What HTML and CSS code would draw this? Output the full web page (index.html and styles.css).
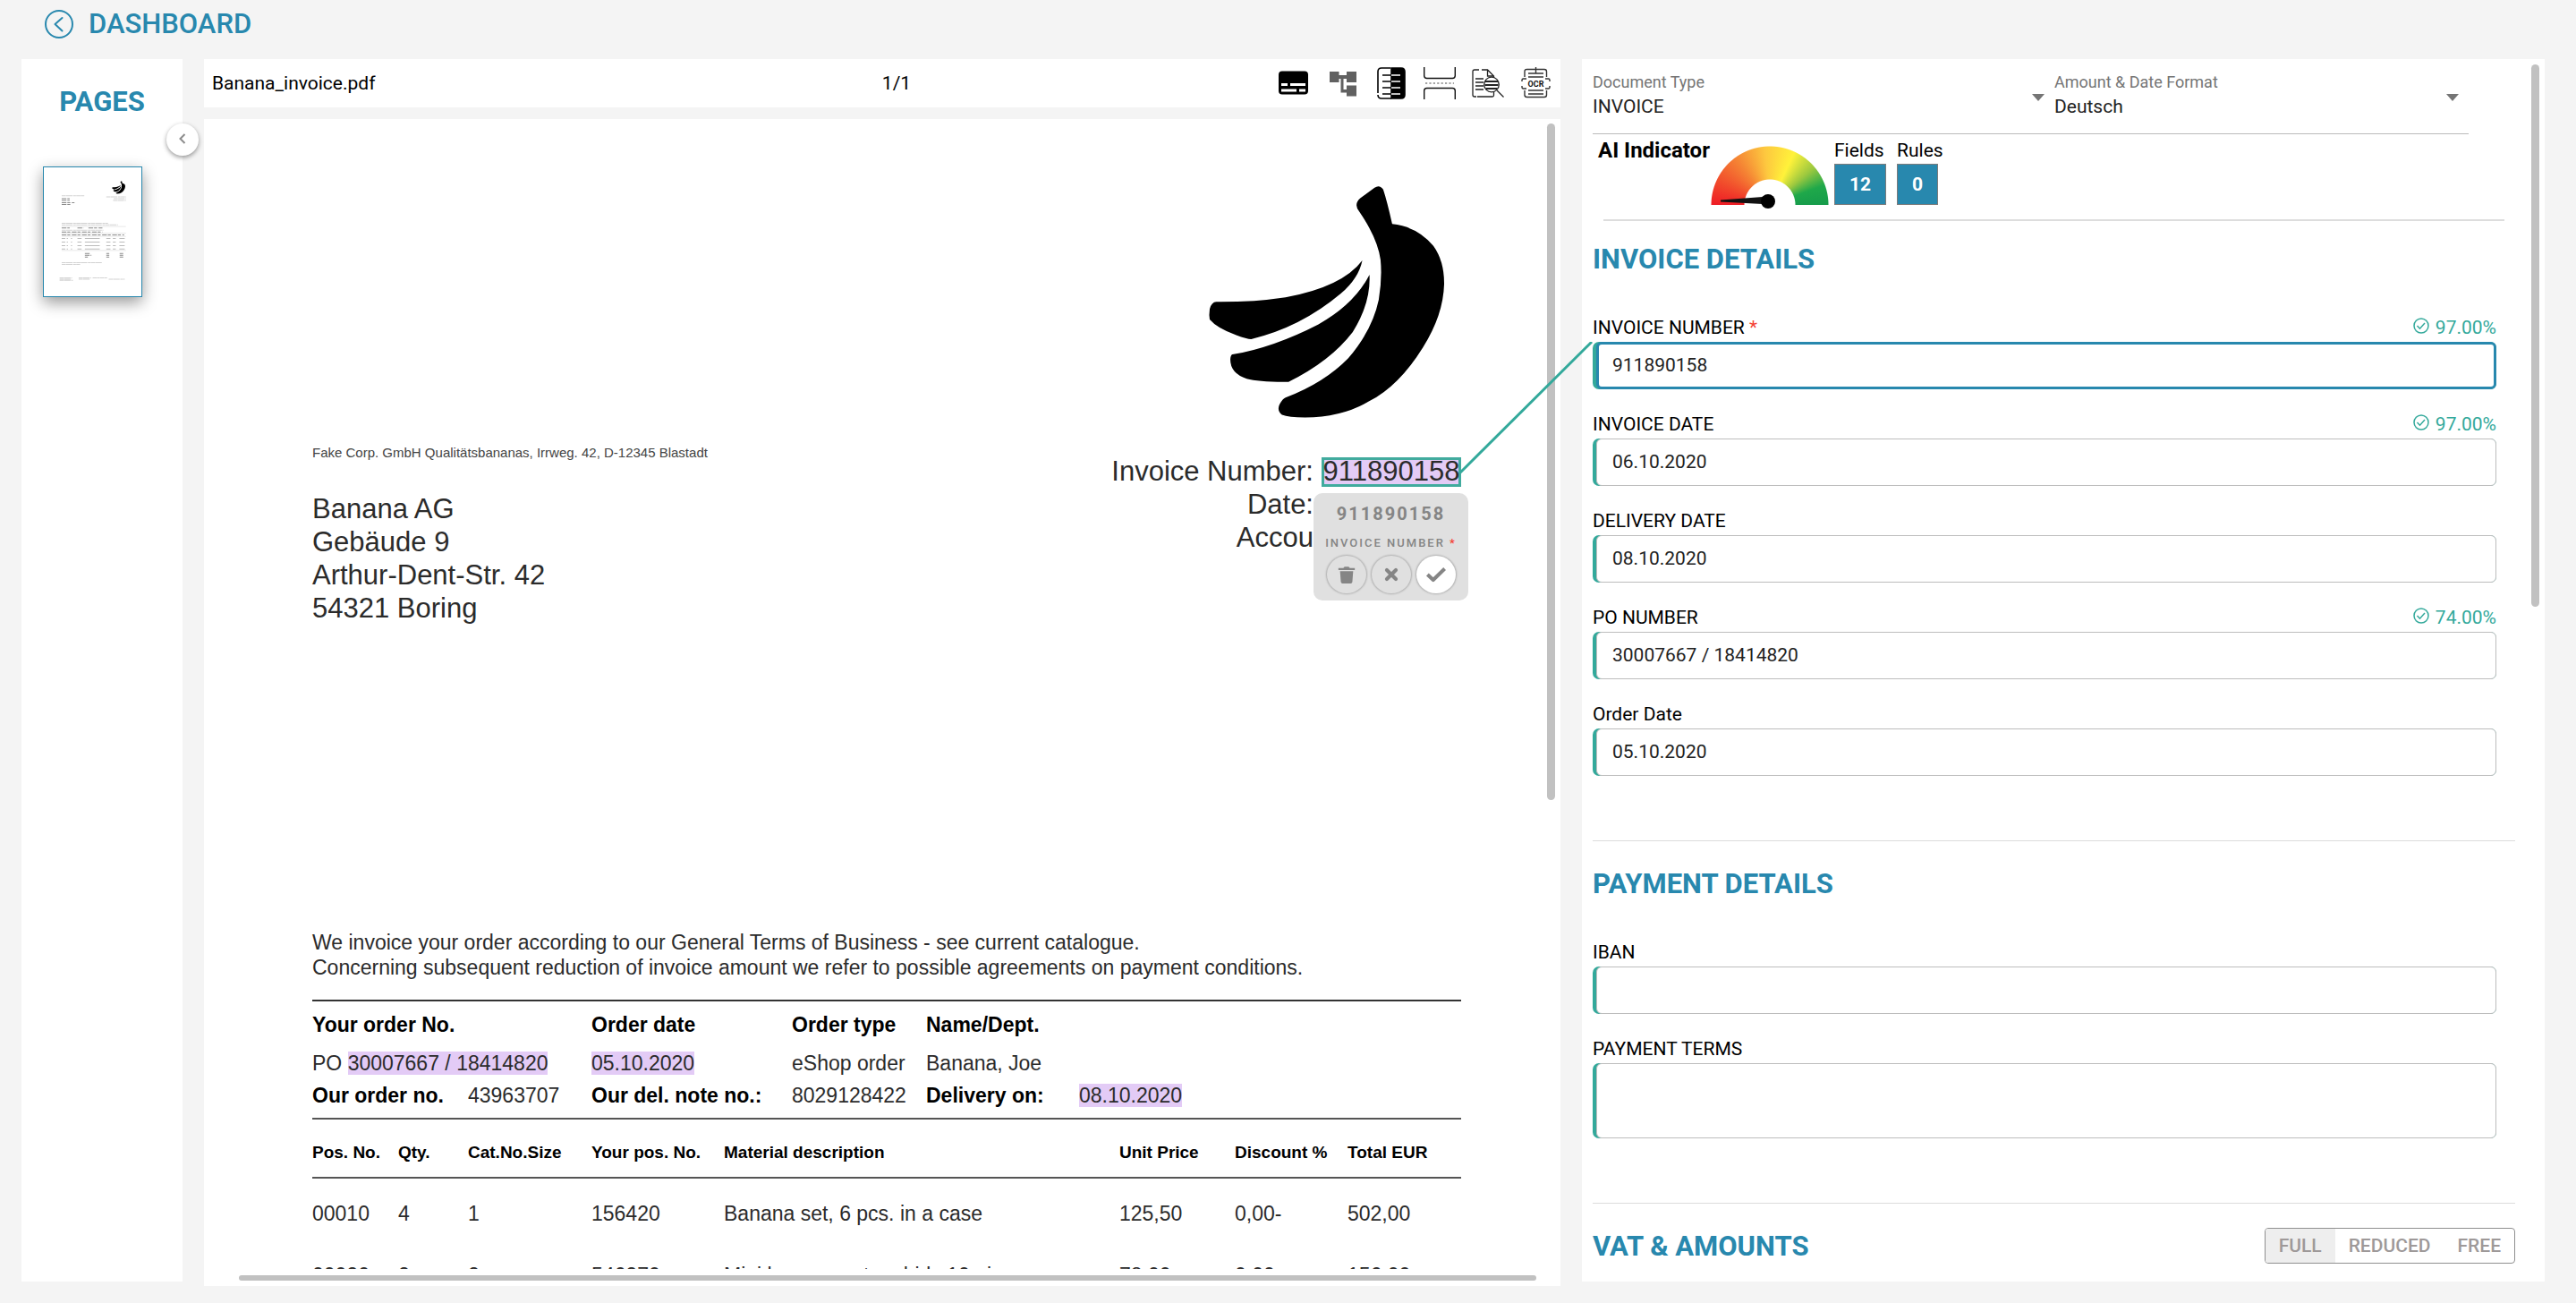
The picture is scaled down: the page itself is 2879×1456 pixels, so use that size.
FILE: index.html
```
<!DOCTYPE html>
<html lang="en">
<head>
<meta charset="utf-8">
<title>Banana_invoice.pdf</title>
<link rel="stylesheet" href="styles.css">
</head>
<body>
<header class="topbar">
  <a class="back" href="#">
    <svg class="back-icon" viewBox="0 0 34 34" fill="none" stroke="currentColor" stroke-width="2" stroke-linecap="round" stroke-linejoin="round"><circle cx="17" cy="17" r="15"/><path d="M20.500 10l-8 7 8 7.500"/></svg>
    <span>DASHBOARD</span>
  </a>
</header>

<main class="workspace">
  <aside class="pages">
    <h2 class="heading pages-title">PAGES</h2>
    <a class="thumb" href="#" aria-label="Page 1">
      <svg viewBox="147 562 328 431" preserveAspectRatio="none" fill="none">
        <g transform="translate(358 600) scale(.056 .056)" fill="#000"><use href="#banana"/></g>
        <g stroke="#d2d2d2" stroke-width="3" stroke-dasharray="14 1 22 2 9 1">
          <path d="M207 657h76M357 661h66M382 667h41M380 673h43M207 749h156M207 754h189M207 772h140M207 881h135M207 887h62M200 932h42M200 936h40M200 940h45M264 932h42M264 936h38M311 932h24M336 932h24M365 936h54"/>
        </g>
        <g stroke="#bdbdbd" stroke-width="3" stroke-dasharray="12 5 4 10 4 18 14 11 50 22 14 8 10 12 16 0">
          <path d="M207 800h212M207 812h212M207 824h212M207 835h212"/>
        </g>
        <g stroke="#8a8a8a" stroke-width="3" stroke-dasharray="16 3 10 5">
          <path d="M207 667h27M207 673h27M207 680h43M207 686h31M207 765h27M260 765h20M297 765h47M207 778h137M207 788h210M285 850h18M357 850h10M402 850h12M285 856h22M357 856h10M402 856h12M285 862h10M357 862h10M402 862h12"/>
        </g>
        <path stroke="#ddd" stroke-width="2" d="M207 760h216M207 782h216M207 793h216M207 840h216"/>
      </svg>
    </a>
    <button class="collapse" type="button" aria-label="Collapse pages">
      <svg viewBox="0 0 12 12" fill="none" stroke="#8c8c8c" stroke-width="2"><path d="M8.500 1L3.500 6l5 5"/></svg>
    </button>
  </aside>

  <section class="viewer">
    <div class="toolbar">
      <span class="file">Banana_invoice.pdf</span>
      <span class="counter">1/1</span>
      <div class="tools">
        <button type="button" aria-label="Captions"><svg viewBox="2 0 36 36"><rect x="2" y="4.500" width="33" height="26" rx="4"/><path fill="#fff" d="M5 18h7v3H5zM15 18h17v3H15zM5 24.500h17v3H5zM25 24.500h7v3h-7z"/></svg></button>
        <button type="button" aria-label="Tree"><svg viewBox="0 0 36 36" fill="#616161"><path d="M3 5h10.500v4H22V5h11v12H22v-4h-3.500v12H22v-4.500h11v12H22v-4h-6.500V13h-2v4H3z"/></svg></button>
        <button type="button" aria-label="Contrast"><svg viewBox="0 0 36 36" fill="none" stroke="#000" stroke-width="1.600"><path d="M17 1H7Q3 1 3 5v24M3 31q0 4 4 4h11"/><path fill="#000" d="M18 1h11q4 0 4 4v26q0 4-4 4H18z"/><path d="M8 9h10M8 16h10M8 23h10M8 30h10"/><path stroke="#fff" d="M18 9h10M18 16h10M18 23h10M18 30h10"/></svg></button>
        <button type="button" aria-label="Split page"><svg viewBox="0 0 36 36" fill="none" stroke="#111" stroke-width="1.400"><path d="M.7 0v9.500q0 3 3 3h28.600q3 0 3-3V0M.7 36v-9.500q0-3 3-3h28.600q3 0 3 3V36"/><path stroke="#888" stroke-width="1.600" stroke-dasharray="2.200 2.200" d="M2 18h32"/></svg></button>
        <button type="button" aria-label="Search document"><svg viewBox="0 0 36 36" fill="none" stroke="#222" stroke-width="1.300"><path d="M8 3H3Q1 3 1 5v26q0 2 2 2h2M11 3h6.500l7 7v4M17.500 3v7h7M6 33h17q1.500 0 1.500-1.500V28M4 13h9M4 17h9M4 21h9M4 25h9"/><circle cx="22" cy="19.500" r="8.300" fill="#fff"/><path d="M28 26l7.500 7.500"/><path stroke-width="2" d="M15 16h14M14.500 20h15M16 24h12"/></svg></button>
        <button type="button" aria-label="OCR"><svg viewBox="0 0 36 36" fill="none" stroke="#333" stroke-width="1.400"><path d="M5 11V5q0-2.500 2.500-2.500H27q2.500 0 2.500 2.500v6M5 26v5q0 2.500 2.500 2.500H27q2.500 0 2.500-2.500v-5M17.500 0v7M9 7h17M9 11h17M9 26h17M9 30h17M7 13H3.500Q2 13 2 14.500V16M2 21v1.500Q2 24 3.500 24H7M28 13h3.500q1.500 0 1.500 1.500V16M33 21v1.500q0 1.500-1.500 1.500H28"/><text x="17.500" y="21.500" class="ocr">OCR</text></svg></button>
      </div>
    </div>

    <div class="canvas">
      <div class="scroll">
        <article class="page">
          <div class="letterhead">
            <div class="sender">
              <p class="from">Fake Corp. GmbH Qualitätsbananas, Irrweg. 42, D-12345 Blastadt</p>
              <address class="address">Banana AG<br>Gebäude 9<br>Arthur-Dent-Str. 42<br>54321 Boring</address>
            </div>
            <div class="brand">
              <svg class="logo" viewBox="330 135 800 765" preserveAspectRatio="none">
                <g id="banana">
                  <path d="M828 205Q826 192 840 180L888 146Q905 134 917 152Q930 190 947 264Q1030 272 1085 335Q1122 385 1121 460Q1118 560 1050 665Q970 790 870 840Q780 892 655 893Q600 892 578 884Q560 870 570 850Q580 832 590 828Q720 780 800 700Q880 610 902 510Q914 440 908 380Q898 310 836 222Q828 212 828 205Z"/>
                  <path d="M847 382Q835 440 775 490Q640 600 475 638Q460 638 425 625Q360 602 336 574Q333 560 336 540Q342 518 358 517Q480 518 590 502Q780 468 847 382Z"/>
                  <path d="M871 429Q876 520 815 615Q740 710 600 777Q500 778 460 767Q405 750 405 704Q406 690 412 688Q550 665 700 590Q820 525 871 429Z"/>
                </g>
              </svg>
              <div class="meta">
                <span>Invoice Number:</span>
                <span class="picked">911890158
                  <span class="popup">
                    <strong class="popup-value">911890158</strong>
                    <span class="popup-label">INVOICE NUMBER <span class="star">*</span></span>
                    <span class="popup-actions">
                      <button type="button" aria-label="Delete"><svg viewBox="0 0 24 24" fill="#858585"><path d="M2 4h6l1.500-1.500h5L16 4h6v2.500H2zM4 8h16l-1 13q-.2 2-2 2H7q-1.800 0-2-2z"/></svg></button>
                      <button type="button" aria-label="Reject"><svg viewBox="0 0 24 24" stroke="#858585" stroke-width="4.500" stroke-linecap="round"><path d="M6.500 6.500l11 11M17.500 6.500l-11 11"/></svg></button>
                      <button class="accept" type="button" aria-label="Accept"><svg viewBox="0 0 24 24" fill="none" stroke="#858585" stroke-width="4.500" stroke-linejoin="round"><path d="M1.500 12l7 6.500L22.500 5"/></svg></button>
                    </span>
                  </span>
                </span>
                <span class="meta-label">Date:</span>
                <span class="meta-label">Accou</span>
              </div>
            </div>
          </div>

          <p class="terms">We invoice your order according to our General Terms of Business - see current catalogue.<br>Concerning subsequent reduction of invoice amount we refer to possible agreements on payment conditions.</p>

          <table class="order">
            <colgroup><col class="w174"><col class="w138"><col class="w224"><col class="w150"><col class="w171"><col></colgroup>
            <tr class="order-head"><th colspan="2">Your order No.</th><th>Order date</th><th>Order type</th><th>Name/Dept.</th><td></td></tr>
            <tr class="order-first"><td colspan="2">PO <mark>30007667 / 18414820</mark></td><td><mark>05.10.2020</mark></td><td>eShop order</td><td>Banana, Joe</td><td></td></tr>
            <tr class="order-second"><th>Our order no.</th><td>43963707</td><th>Our del. note no.:</th><td>8029128422</td><th>Delivery on:</th><td><mark>08.10.2020</mark></td></tr>
          </table>

          <table class="items">
            <colgroup><col class="w96"><col class="w78"><col class="w138"><col class="w148"><col class="w442"><col class="w129"><col class="w126"><col></colgroup>
            <thead><tr><th>Pos. No.</th><th>Qty.</th><th>Cat.No.Size</th><th>Your pos. No.</th><th>Material description</th><th>Unit Price</th><th>Discount %</th><th>Total EUR</th></tr></thead>
            <tbody>
              <tr><td>00010</td><td>4</td><td>1</td><td>156420</td><td>Banana set, 6 pcs. in a case</td><td>125,50</td><td>0,00-</td><td>502,00</td></tr>
              <tr><td>00020</td><td>2</td><td>2</td><td>546270</td><td>Mini banana set orchids 10 pieces</td><td>78,00</td><td>0,00-</td><td>156,00</td></tr>
            </tbody>
          </table>
        </article>
      </div>
      <div class="bar bar-y"></div>
      <div class="bar bar-x"></div>
    </div>
  </section>

  <section class="details">
    <svg class="link" viewBox="0 0 148 147" fill="none" stroke="#33a99b" stroke-width="3"><path d="M0 146L147 0"/></svg>
    <form class="form">
      <div class="selects">
        <div class="select-field">
          <label for="doctype">Document Type</label>
          <select id="doctype"><option>INVOICE</option></select>
          <svg class="caret" viewBox="0 0 14 8"><path d="M0 0h14L7 8z"/></svg>
        </div>
        <div class="select-field">
          <label for="format">Amount &amp; Date Format</label>
          <select id="format"><option>Deutsch</option></select>
          <svg class="caret" viewBox="0 0 14 8"><path d="M0 0h14L7 8z"/></svg>
        </div>
      </div>

      <div class="indicator">
        <strong class="indicator-title">AI Indicator</strong>
        <div class="gauge-box">
          <div class="gauge"></div>
          <svg class="needle" viewBox="0 0 132 72"><path fill="#111" d="M11 60.500L58 57v8L11 62.500z"/><ellipse cx="64" cy="62" rx="8" ry="8"/></svg>
        </div>
        <div class="stats">
          <div class="stat"><span>Fields</span><strong>12</strong></div>
          <div class="stat"><span>Rules</span><strong>0</strong></div>
        </div>
      </div>

      <section class="group first">
        <h2 class="heading">INVOICE DETAILS</h2>
        <div class="fields">
          <div class="field">
            <div class="field-top"><label for="number">INVOICE NUMBER <span class="star">*</span></label><span class="score"><svg viewBox="0 0 18 18"><circle cx="9" cy="9" r="8"/><path d="M4.500 9l3 3.200L13 6"/></svg>97.00%</span></div>
            <div class="box active"><input id="number" type="text" value="911890158"></div>
          </div>
          <div class="field">
            <div class="field-top"><label for="invdate">INVOICE DATE</label><span class="score"><svg viewBox="0 0 18 18"><circle cx="9" cy="9" r="8"/><path d="M4.500 9l3 3.200L13 6"/></svg>97.00%</span></div>
            <div class="box"><input id="invdate" type="text" value="06.10.2020"></div>
          </div>
          <div class="field">
            <div class="field-top"><label for="deldate">DELIVERY DATE</label></div>
            <div class="box"><input id="deldate" type="text" value="08.10.2020"></div>
          </div>
          <div class="field">
            <div class="field-top"><label for="po">PO NUMBER</label><span class="score"><svg viewBox="0 0 18 18"><circle cx="9" cy="9" r="8"/><path d="M4.500 9l3 3.200L13 6"/></svg>74.00%</span></div>
            <div class="box"><input id="po" type="text" value="30007667 / 18414820"></div>
          </div>
          <div class="field">
            <div class="field-top"><label for="orddate">Order Date</label></div>
            <div class="box"><input id="orddate" type="text" value="05.10.2020"></div>
          </div>
        </div>
      </section>

      <section class="group">
        <h2 class="heading">PAYMENT DETAILS</h2>
        <div class="fields">
          <div class="field">
            <div class="field-top"><label for="iban">IBAN</label></div>
            <div class="box"><input id="iban" type="text"></div>
          </div>
          <div class="field">
            <div class="field-top"><label for="terms">PAYMENT TERMS</label></div>
            <div class="box"><textarea id="terms"></textarea></div>
          </div>
        </div>
      </section>

      <section class="group vat">
        <h2 class="heading">VAT &amp; AMOUNTS</h2>
        <div class="toggle">
          <button class="on" type="button">FULL</button>
          <button type="button">REDUCED</button>
          <button type="button">FREE</button>
        </div>
      </section>
    </form>
    <div class="bar bar-form"></div>
  </section>
</main>
</body>
</html>
```
FILE: styles.css
```
* { box-sizing: border-box; }
body {
  margin: 0;
  height: 100vh;
  display: flex;
  flex-direction: column;
  overflow: hidden;
  background: #f4f4f4;
  color: #000;
  font: 21px/24px Roboto, "Liberation Sans", sans-serif;
}
button, input, select, textarea { font: inherit; color: inherit; margin: 0; }
button { padding: 0; border: 0; background: none; cursor: pointer; }
p, h2 { margin: 0; }
svg { display: block; }
.heading { color: #2888ae; font-size: 31px; line-height: 36px; font-weight: 700; }
.star { color: #f44336; }

.topbar { flex: none; height: 66px; padding: 9px 0 0 49px; }
.back {
  display: inline-flex;
  align-items: center;
  gap: 16px;
  color: #2888ae;
  text-decoration: none;
  font-size: 31px;
  line-height: 36px;
  font-weight: 500;
}
.back-icon { width: 34px; height: 34px; }

.workspace {
  flex: 1;
  min-height: 0;
  display: grid;
  grid-template-columns: 180px minmax(0, 1516fr) minmax(0, 1076fr);
  gap: 24px;
  padding: 0 35px 19px 24px;
}

.pages { position: relative; background: #fff; padding: 30px 24px; margin-bottom: 5px; }
.pages-title { text-align: center; }
.thumb {
  display: block;
  width: 111px;
  height: 146px;
  margin-top: 54px;
  border: 1px solid #2888ae;
  background: #fff;
  box-shadow: 0 6px 16px rgba(0, 0, 0, .4);
}
.thumb svg { width: 100%; height: 100%; }
.collapse {
  position: absolute;
  top: 72px;
  right: -18px;
  z-index: 2;
  width: 36px;
  height: 36px;
  border-radius: 50%;
  background: #fff;
  box-shadow: 0 2px 5px rgba(0, 0, 0, .4);
}
.collapse svg { width: 12px; height: 12px; margin: 0 auto 2px; }

.viewer { display: flex; flex-direction: column; gap: 13px; min-height: 0; }
.toolbar {
  flex: none;
  height: 54px;
  display: grid;
  grid-template-columns: 1fr auto 1fr;
  align-items: center;
  padding: 0 9px;
  background: #fff;
}
.counter { padding-left: 32px; }
.tools { display: flex; justify-content: flex-end; gap: 18px; }
.tools svg { width: 36px; height: 36px; }
.ocr { font: 700 9px Roboto, sans-serif; fill: #111; stroke: none; text-anchor: middle; }

.canvas { position: relative; flex: 1; min-height: 0; background: #fff; padding-bottom: 19px; }
.scroll { height: 100%; overflow: hidden; }
.bar { position: absolute; border-radius: 5px; background: #c1c1c1; }
.bar-y { top: 5px; right: 6px; width: 9px; height: 58%; }
.bar-x { left: 39px; right: 27px; bottom: 6px; height: 6px; }

.page {
  width: 1516px;
  padding: 73px 111px 0 121px;
  color: #2b2b2b;
  font-family: "Liberation Sans", Arial, sans-serif;
  font-size: 23px;
  line-height: 28px;
}
.letterhead { display: flex; justify-content: space-between; height: 833px; }
.sender { padding-top: 290px; }
.from { font-size: 15px; line-height: 20px; color: #444; }
.address { margin-top: 34px; font-style: normal; font-size: 31px; line-height: 37px; }
.brand { display: flex; flex-direction: column; align-items: flex-end; }
.logo { width: 267px; height: 263px; margin-right: 16px; fill: #000; }
.meta {
  display: grid;
  grid-template-columns: auto 156px;
  grid-auto-rows: 37px;
  column-gap: 9px;
  margin-top: 39px;
  font-size: 31px;
  line-height: 37px;
  text-align: right;
}
.meta-label { grid-column: 1; }
.picked {
  position: relative;
  height: 33px;
  margin-top: 3px;
  line-height: 32px;
  text-align: center;
  background: #e3cbf6;
  box-shadow: inset 0 0 0 3px #41ab9e;
}
.popup {
  position: absolute;
  top: 40px;
  right: -8px;
  width: 173px;
  height: 120px;
  padding: 10px 0 7px;
  display: flex;
  flex-direction: column;
  align-items: center;
  border-radius: 10px;
  background: #e0e0e0;
  color: #858585;
  font-family: Roboto, sans-serif;
}
.popup-value { font-size: 20px; line-height: 26px; letter-spacing: 2px; }
.popup-label { margin-top: 10px; font-size: 13px; line-height: 20px; font-weight: 500; letter-spacing: 2px; white-space: nowrap; }
.popup-actions { display: flex; gap: 6px; margin-top: 4px; }
.popup-actions button {
  width: 44px;
  height: 42px;
  display: flex;
  align-items: center;
  justify-content: center;
  border-radius: 50%;
  box-shadow: 0 0 2px 1px rgba(0, 0, 0, .22);
}
.popup-actions .accept { background: #fff; }
.popup-actions svg { width: 22px; height: 22px; }

.terms { white-space: nowrap; }
table { width: 1284px; table-layout: fixed; border-collapse: separate; border-spacing: 0; text-align: left; white-space: nowrap; }
th, td { padding: 0; }
.order { margin-top: 22px; border-top: 2px solid #333; line-height: 24px; }
.order th { color: #000; }
.order-head { height: 52px; }
.order-first { height: 34px; }
.order-second { height: 38px; }
mark { background: #e3cbf6; color: inherit; }
.items { margin-top: 6px; border-top: 2px solid #555; }
.items th { height: 66px; padding-top: 9px; border-bottom: 2px solid #555; font-size: 19px; color: #000; }
.items tbody td { height: 60px; }
.items tbody tr:first-child td { height: 78px; }
.w78 { width: 78px; }
.w96 { width: 96px; }
.w126 { width: 126px; }
.w129 { width: 129px; }
.w138 { width: 138px; }
.w148 { width: 148px; }
.w150 { width: 150px; }
.w171 { width: 171px; }
.w174 { width: 174px; }
.w224 { width: 224px; }
.w442 { width: 442px; }

.details { position: relative; min-height: 0; margin-bottom: 5px; background: #fff; }
.link { position: absolute; left: -136px; top: 316px; z-index: 3; width: 148px; height: 147px; }
.form { height: 100%; overflow: hidden; padding: 0 33px 0 12px; }
.bar-form { top: 6px; right: 6px; width: 9px; height: 606px; }

.selects {
  display: grid;
  grid-template-columns: 516fr 463fr;
  height: 84px;
  margin-right: 52px;
  padding-top: 14px;
  border-bottom: 1px solid #bbb;
}
.select-field { position: relative; display: flex; flex-direction: column; color: #222; }
.select-field label { font-size: 18px; color: #757575; }
.select-field select {
  height: 30px;
  padding: 0;
  border: 0;
  background: none;
  appearance: none;
}
.caret { position: absolute; top: 25px; right: 11px; width: 14px; height: 8px; fill: #757575; }

.indicator {
  display: flex;
  height: 97px;
  margin: 0 12px;
  padding-top: 6px;
  border-bottom: 2px solid #ddd;
}
.indicator-title { margin-left: -6px; font-size: 24px; }
.gauge-box { position: relative; width: 132px; height: 66px; margin: 7px 6px 0 1px; }
.gauge {
  width: 132px;
  height: 66px;
  background: conic-gradient(from -90deg at 50% 100%, #ee1c25, #f58634 55deg, #fdc83f 85deg, #fff23a 115deg, #9bc83f 140deg, #1fa84a 160deg, #169c4b 180deg);
  -webkit-mask: radial-gradient(circle at 50% 100%, transparent 28px, #000 29px, #000 65px, transparent 66px);
  mask: radial-gradient(circle at 50% 100%, transparent 28px, #000 29px, #000 65px, transparent 66px);
}
.needle { position: absolute; left: 0; top: 0; width: 132px; height: 72px; }
.stats { display: flex; gap: 12px; align-items: flex-start; }
.stat { display: flex; flex-direction: column; }
.stat strong {
  align-self: flex-start;
  margin-top: 3px;
  padding: 0 16px;
  border: 1px solid #7b7b7b;
  background: #2888ae;
  color: #fff;
  line-height: 44px;
}

.group { padding: 30px 0 72px; border-bottom: 1px solid #dcdcdc; }
.group.first { padding-top: 25px; }
.fields { display: grid; gap: 27px; margin: 46px 21px 0 0; }
.field-top { display: flex; justify-content: space-between; margin-bottom: 4px; }
.score { display: flex; align-items: center; gap: 7px; color: #33a99b; }
.score svg { width: 18px; height: 18px; margin-top: -4px; fill: none; stroke: currentColor; stroke-width: 1.500; }
.box { display: flex; padding-left: 4px; border-radius: 7px; background: #33a99b; }
.box input, .box textarea {
  flex: 1;
  min-width: 0;
  height: 53px;
  padding: 0 17px 2px;
  border: 1px solid #bdbdbd;
  border-radius: 6px;
  background: #fff;
  color: #222;
  resize: none;
  outline: 0;
}
.box textarea { height: 84px; }
.box.active input { border: 3px solid #2888ae; padding: 0 15px 2px; }
.vat { display: flex; justify-content: space-between; align-items: center; border: 0; }
.toggle { display: flex; height: 40px; margin: -4px 0 -2px; overflow: hidden; border: 1px solid #8f8f8f; border-radius: 4px; }
.toggle button { padding: 0 15px; color: #9e9999; font-weight: 500; }
.toggle .on { background: #eee; }
```
